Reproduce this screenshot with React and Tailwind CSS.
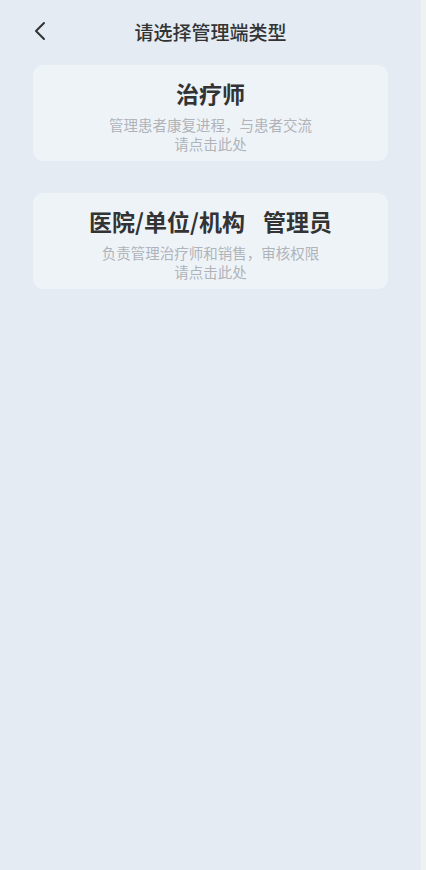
import React from 'react';

const roles = [
  {
    id: 'therapist',
    title: ['治疗师'],
    desc: '管理患者康复进程，与患者交流',
  },
  {
    id: 'admin',
    title: ['医院/单位/机构', '管理员'],
    desc: '负责管理治疗师和销售，审核权限',
  },
];

export default function App() {
  return (
    <div
      className="flex min-h-[870px] w-full bg-[#f0f1f2]"
      style={{ fontFamily: '"Noto Sans CJK SC", "Noto Sans", sans-serif' }}
    >
      <div className="flex w-[421px] flex-col bg-[#e4ebf2]">
        {/* Header */}
        <header className="relative flex h-[63px] items-center justify-center">
          <button className="absolute left-[30px] top-[20px] flex h-[22px] w-[20px] items-center justify-center">
            <svg width="14" height="20" viewBox="0 0 14 20" fill="none">
              <path d="M11 2L3 10l8 8" stroke="#333" strokeWidth="2" strokeLinecap="round" strokeLinejoin="round" />
            </svg>
          </button>
          <h1 className="text-[19px] font-medium leading-none text-[#333]">请选择管理端类型</h1>
        </header>

        {/* Role cards */}
        <main className="flex flex-col gap-8 px-[33px] pt-[2px]">
          {roles.map((role) => (
            <div
              key={role.id}
              className="flex h-[96px] flex-col items-center rounded-[10px] bg-[#eef3f8] pt-[12px]"
            >
              <h2 className="flex gap-[18px] text-[23px] font-bold leading-[32px] text-[#333]">
                {role.title.map((t) => (
                  <span key={t}>{t}</span>
                ))}
              </h2>
              <p className="mt-[6px] text-center text-[14.5px] leading-[19px] text-[#b0b4b8]">
                {role.desc}
                <br />
                请点击此处
              </p>
            </div>
          ))}
        </main>
      </div>
    </div>
  );
}
